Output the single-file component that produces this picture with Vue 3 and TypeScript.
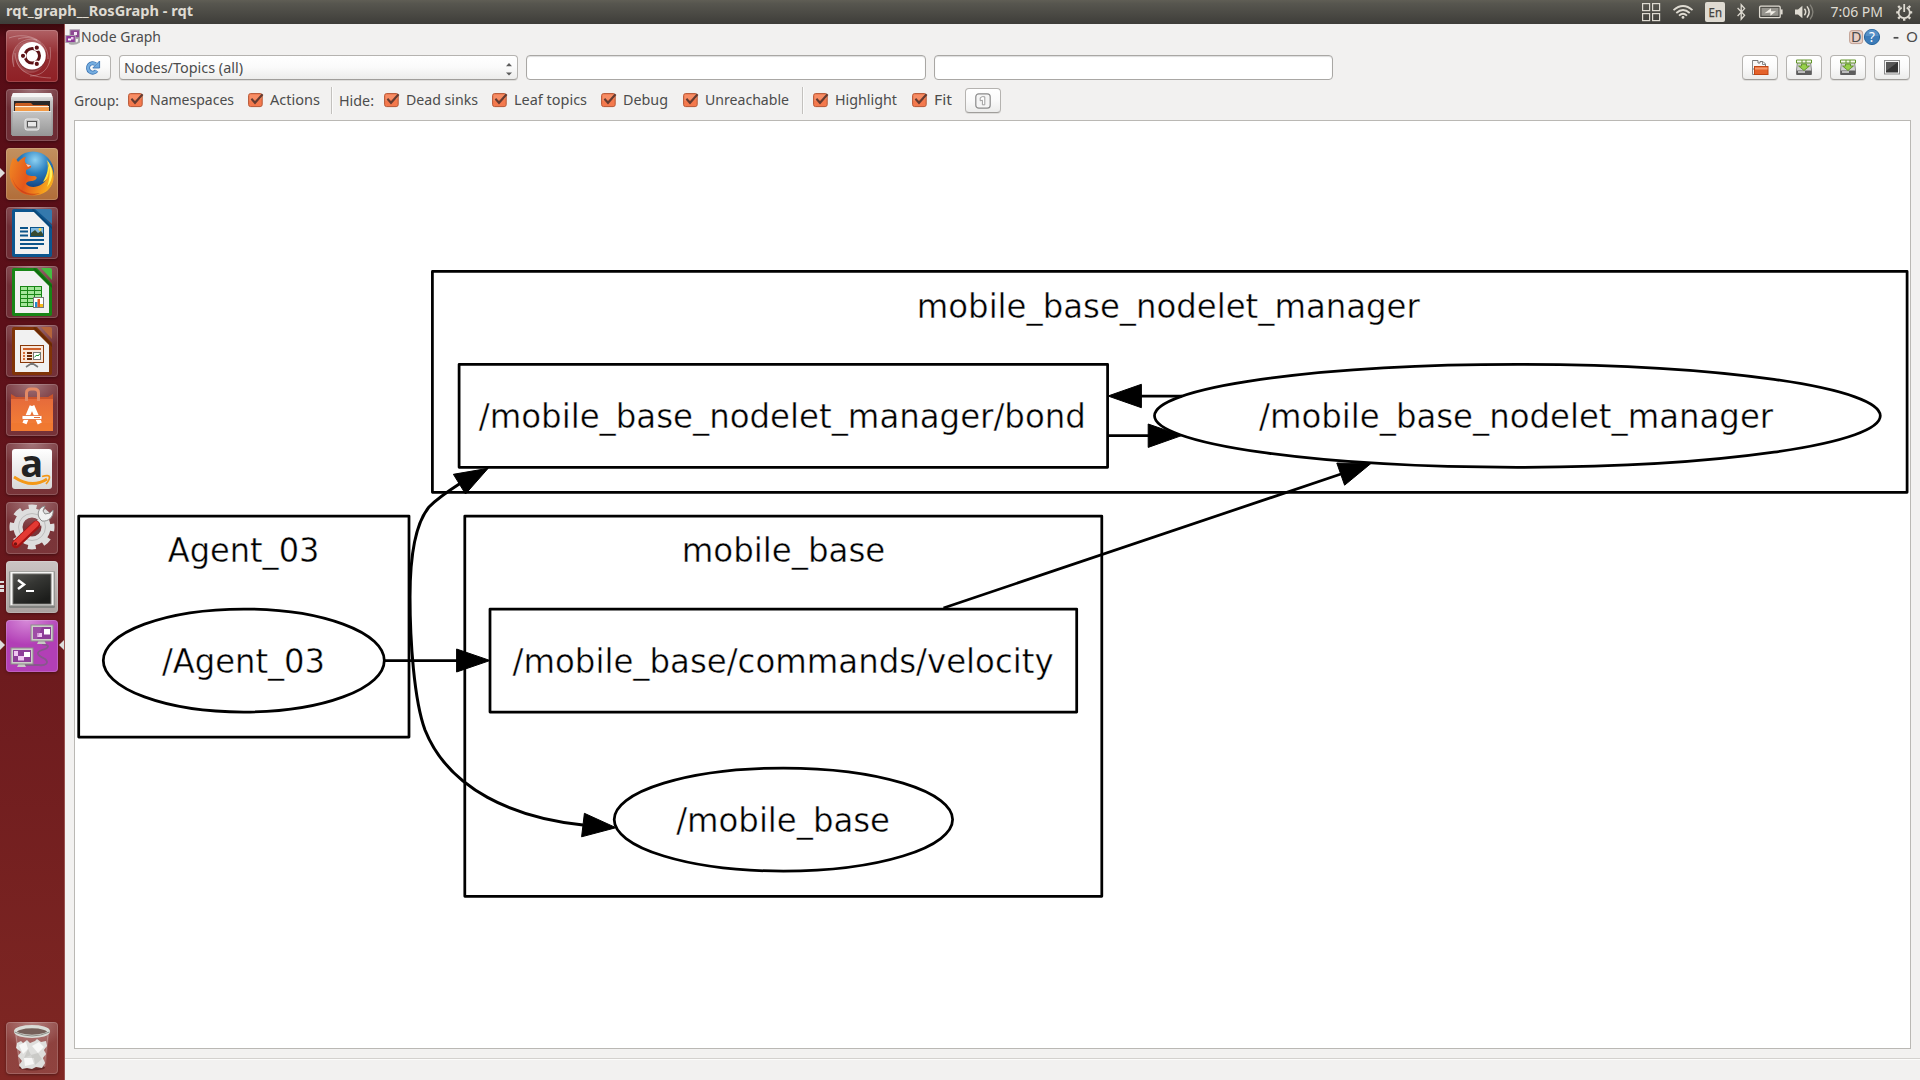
<script setup lang="ts">
import { h, type FunctionalComponent } from 'vue'

interface FitProps {
  text: string
  w: number
  size?: number
  color?: string
  weight?: number
}

/* Single-line label that always occupies exactly `w` pixels. */
const FitText: FunctionalComponent<FitProps> = (p) =>
  h('svg', { width: p.w, height: 20, style: 'overflow:visible;flex:none;display:block' }, [
    h(
      'text',
      {
        x: -1,
        y: 15,
        textLength: p.w + 2,
        lengthAdjust: 'spacingAndGlyphs',
        'font-family': '"Noto Sans", "Open Sans", sans-serif',
        'font-size': p.size ?? 14.4,
        'font-weight': p.weight ?? 400,
        fill: p.color ?? '#4c4c4c',
      },
      p.text,
    ),
  ])
FitText.props = ['text', 'w', 'size', 'color', 'weight']

interface Option {
  kind: 'label' | 'check' | 'sep'
  text?: string
  w?: number
  gap: number
}

const options: Option[] = [
  { kind: 'label', text: 'Group:', w: 43, gap: 0 },
  { kind: 'check', text: 'Namespaces', w: 82, gap: 10 },
  { kind: 'check', text: 'Actions', w: 48, gap: 15 },
  { kind: 'sep', gap: 12 },
  { kind: 'label', text: 'Hide:', w: 33, gap: 7 },
  { kind: 'check', text: 'Dead sinks', w: 70, gap: 11 },
  { kind: 'check', text: 'Leaf topics', w: 71, gap: 15 },
  { kind: 'check', text: 'Debug', w: 43, gap: 15 },
  { kind: 'check', text: 'Unreachable', w: 82, gap: 16 },
  { kind: 'sep', gap: 14 },
  { kind: 'check', text: 'Highlight', w: 60, gap: 9 },
  { kind: 'check', text: 'Fit', w: 16, gap: 16 },
]

interface Box { x: number; y: number; w: number; h: number }
const boxes: Box[] = [
  { x: 78.7, y: 516, w: 330.3, h: 221 },
  { x: 464.8, y: 516, w: 637, h: 380.3 },
  { x: 432.4, y: 271.4, w: 1474.7, h: 220.9 },
  { x: 490, y: 609, w: 586.7, h: 103 },
  { x: 459.1, y: 364.3, w: 648.5, h: 103 },
]

const ellipses = [
  { cx: 243.8, cy: 660.5, rx: 140.5 },
  { cx: 783.4, cy: 819.6, rx: 169.2 },
  { cx: 1517.4, cy: 415.8, rx: 362.9 },
]

const labels = [
  { t: 'Agent_03', x: 167.8, y: 562.4, w: 151.6 },
  { t: '/Agent_03', x: 161.9, y: 672.8, w: 163.2 },
  { t: 'mobile_base', x: 681.7, y: 562.4, w: 203.6 },
  { t: '/mobile_base/commands/velocity', x: 512.6, y: 672.8, w: 541 },
  { t: '/mobile_base', x: 676.2, y: 832, w: 213.8 },
  { t: 'mobile_base_nodelet_manager', x: 916.8, y: 317.7, w: 503 },
  { t: '/mobile_base_nodelet_manager/bond', x: 478.8, y: 428, w: 607 },
  { t: '/mobile_base_nodelet_manager', x: 1259.1, y: 428, w: 514 },
]

const edges = [
  'M385 660.5H458',
  'M1182 396H1140',
  'M1108 435.6H1150',
  'M943.5 608L1341 474',
]
const returnEdge =
  'M460 483.6C447 492 436 500 429 507C415 524 410 560 410 597C410 640 414 700 425 730C449 790 515 818 583 825'

const heads = [
  '456.6,649 490,660.5 456.6,672',
  '1141.4,384.3 1108,396 1141.4,407.7',
  '1148.2,424 1181.6,435.6 1148.2,447.4',
  '1336.8,463 1370.7,463.7 1344.6,485.2',
  '453.4,474.3 488.2,468.3 465.5,494',
  '584.4,813.3 616,827.7 581.6,836.8',
]
</script>

<template>
  <div class="desktop">
    <header class="panel">
      <FitText text="rqt_graph__RosGraph - rqt" :w="185" :size="14.2" :weight="700" color="#dfdbd2" />
      <div class="grow"></div>
      <svg class="tray" width="280" height="24" viewBox="1640 0 280 24" fill="none" stroke="#dfdbd2">
        <g stroke-width="1.2">
          <rect x="1642.6" y="3.6" width="7" height="7" /><rect x="1652.6" y="3.6" width="7" height="7" />
          <rect x="1642.6" y="13.6" width="7" height="7" /><rect x="1652.6" y="13.6" width="7" height="7" />
        </g>
        <g stroke-width="1.8">
          <path d="M1673.5 10.2Q1683 1.8 1692.5 10.2" /><path d="M1676.3 13Q1683 7 1689.7 13" />
          <path d="M1679 15.6Q1683 12 1687 15.6" /><circle cx="1683" cy="17.4" r="1.4" fill="#dfdbd2" stroke="none" />
        </g>
        <rect x="1705" y="2" width="20" height="20" rx="2" fill="#dfdbd2" stroke="none" />
        <text x="1708.6" y="17" font-size="12.5" font-family="Noto Sans, sans-serif" fill="#43423e" stroke="#43423e" stroke-width=".25" textLength="13.4" lengthAdjust="spacingAndGlyphs">En</text>
        <path d="M1737.6 8L1744.6 15.2L1741.2 19.2V4.8L1744.6 8.6L1737.6 16" stroke-width="1.3" />
        <rect x="1759.6" y="6.2" width="20.6" height="11.4" rx="1.2" stroke-width="1.3" />
        <rect x="1761.5" y="8" width="17" height="7.8" fill="#96948d" stroke="none" />
        <path d="M1781.6 9.4V14.4" stroke-width="2" />
        <path d="M1764.5 13.2L1771 8.2V11.2H1776L1770.4 15.8V12.6Z" fill="#f0ede5" stroke="none" />
        <path d="M1795 9.6H1798L1802.4 5.8V18.2L1798 14.4H1795Z" fill="#dfdbd2" stroke="none" />
        <path d="M1804.4 8.8Q1807 12 1804.4 15.2" stroke-width="1.5" /><path d="M1807 6.4Q1811.4 12 1807 17.6" stroke-width="1.5" />
        <path d="M1810 4.6Q1815.8 12 1810 19.4" stroke="#85837b" stroke-width="1.3" />
        <text x="1830.5" y="17" font-size="14.2" font-family="Noto Sans, sans-serif" fill="#dfdbd2" stroke="none" textLength="52.5" lengthAdjust="spacingAndGlyphs">7:06 PM</text>
        <g stroke-width="1.8">
          <path d="M1901.7 7.6A5.6 5.6 0 1 0 1906.7 7.6" /><path d="M1904.2 4V12" />
          <path stroke-width="2.4" d="M1908.6 7.6L1910.2 6M1910 12.4H1912.2M1908.6 17L1910.2 18.6M1904.2 18.4V20.8M1899.8 17L1898.2 18.6M1898.4 12.4H1896.2M1899.8 7.6L1898.2 6" />
        </g>
      </svg>
    </header>

    <div class="body">
      <nav class="launcher">
        <div class="tile ubuntu">
          <svg viewBox="0 0 52 52">
            <g fill="none" stroke="#fff" stroke-opacity=".28">
              <path d="M3 8C22 1 43 11 42 29" /><path d="M12 9C30 3 40 17 39 26" />
              <path d="M8 37C2 19 15 6 31 10" /><path d="M45 48C22 47 10 41 9 23" /><path d="M24 46C37 46 47 37 44 17" />
            </g>
            <path d="M8 37C2 22 12 9 31 10L40 20C41 38 31 46 18 42C12 38 9 32 9 23Z" fill="#fff" opacity=".15" />
            <circle cx="26" cy="26.6" r="14.2" fill="#4b0c10" opacity=".35" /><circle cx="26" cy="25.8" r="13.8" fill="#fff" />
            <circle cx="26.2" cy="25.8" r="7.3" fill="none" stroke="#5c1216" stroke-width="3" />
            <g fill="#5c1216" stroke="#fff" stroke-width="1.2">
              <circle cx="17" cy="25.8" r="2.7" /><circle cx="30.8" cy="17.7" r="2.7" /><circle cx="30.8" cy="33.9" r="2.7" />
            </g>
          </svg>
        </div>

        <div class="tile">
          <svg viewBox="0 0 52 52">
            <defs>
              <linearGradient id="cab" x2="0" y2="1"><stop offset="0" stop-color="#f3f3f3" /><stop offset=".2" stop-color="#c4c4c4" /><stop offset="1" stop-color="#8b8b8b" /></linearGradient>
              <linearGradient id="drawer" x2="0" y2="1"><stop stop-color="#c5c5c5" /><stop offset="1" stop-color="#969696" /></linearGradient>
            </defs>
            <path d="M7 4H45L47 9V46H5V9Z" fill="url(#cab)" />
            <path d="M7 4H45L46.5 8H5.5Z" fill="#f5f5f5" />
            <rect x="8" y="12" width="36" height="11" fill="#292828" />
            <path d="M10 14H25L27 16H42V22H9V15Z" fill="#c85d20" /><rect x="9" y="17" width="34" height="1.5" fill="#fff0d8" /><rect x="9" y="18.5" width="34" height="4" fill="#f39a45" />
            <path d="M7 22H45L46 47H6Z" fill="url(#drawer)" /><path d="M7 22.5H45" stroke="#e8e8e8" />
            <rect x="19" y="30" width="14" height="11" rx="2" fill="#bfbfbf" stroke="#f1f1f1" /><rect x="21.5" y="32.5" width="9" height="5.5" fill="#e8e8e8" stroke="#555" />
          </svg>
        </div>

        <div class="tile firefox">
          <svg viewBox="0 0 52 52">
            <defs>
              <radialGradient id="globe" cx=".55" cy=".2" r=".8"><stop stop-color="#8fd2f2" /><stop offset=".4" stop-color="#2a7fc0" /><stop offset="1" stop-color="#0d2a66" /></radialGradient>
              <linearGradient id="fox" x1="0" y1="0" x2="1" y2=".3"><stop stop-color="#f08a24" /><stop offset=".5" stop-color="#e4571b" /><stop offset="1" stop-color="#f8a81d" /></linearGradient>
            </defs>
            <circle cx="27" cy="24.5" r="21" fill="url(#globe)" />
            <path d="M40 11C44 19 41 27 37 34C43 31 45 25 44 18C50 28 47 39 39 44C43 38 47 25 40 11Z" fill="#ffe63d" />
            <path d="M7 10C9 10 11 12 12 14C15 11 17 9 20 9C18 12 19 15 21 16C23 17 26 17 25 19C24 21 20 21 20 23C19 27 23 28 27 28C31 28 32 30 29 32C26 34 21 32 20 36C25 42 38 39 42 28C44 22 43 17 41 13C50 22 50 35 41 43C30 51 14 48 7 37C1 27 4 17 7 10Z" fill="url(#fox)" />
            <path d="M41 12C48 20 48 31 41 39C44 31 45 22 41 12Z" fill="#fff05a" />
            <path d="M20 16L25 17.5L22 19Z" fill="#fff" opacity=".7" />
            <path d="M6 29C9 41 21 48 34 45C24 51 9 44 6 29Z" fill="#bd3217" opacity=".55" />
          </svg>
          <i class="mark left"></i>
        </div>

        <div class="tile">
          <svg viewBox="0 0 52 52">
            <path d="M8 2H31L46 18V48Q46 50 44 50H8Q6 50 6 48V4Q6 2 8 2Z" fill="#0c568f" />
            <path d="M9 5H28L43 20V47H9Z" fill="#f1f1f1" /><path d="M29 2H44Q46 2 46 4V17Z" fill="#3479ad" /><path d="M27 2L46 20V22L26 3Z" fill="#073c66" opacity=".65" />
            <path d="M14 21H22M14 24.5H22M14 28.5H22M14 33H38M14 37H38M14 41H32" stroke="#0b548a" stroke-width="1.8" />
            <rect x="24.5" y="20.5" width="13" height="9" fill="#83bbe1" stroke="#0b548a" /><path d="M25 29V26L29 23L32 26L35 24L37 27V29Z" fill="#394b30" /><circle cx="34" cy="22.5" r="1.4" fill="#fbd543" />
          </svg>
        </div>

        <div class="tile">
          <svg viewBox="0 0 52 52">
            <path d="M8 2H31L46 18V48Q46 50 44 50H8Q6 50 6 48V4Q6 2 8 2Z" fill="#188516" />
            <path d="M9 5H28L43 20V47H9Z" fill="#f1f1f1" /><path d="M35 2H44Q46 2 46 4V14Z" fill="#45bd42" /><path d="M29 2L46 19V22L27 3Z" fill="#0b5d0a" opacity=".65" />
            <rect x="14.5" y="20.5" width="21" height="20" fill="#a4e69a" stroke="#198616" /><path d="M14 24.5H36M14 28.5H36M14 32.5H36M14 36.5H36M21.5 20V41M28.5 20V41" stroke="#198616" />
            <rect x="27.5" y="31.5" width="10" height="10" fill="#fff" stroke="#777" /><path d="M29 41V36H31.5V41Z" fill="#238bd0" /><path d="M31.5 41V33H34V41Z" fill="#e35b22" /><path d="M34 41V38H37V41Z" fill="#f5ba18" />
          </svg>
        </div>

        <div class="tile">
          <svg viewBox="0 0 52 52">
            <path d="M8 2H31L46 18V48Q46 50 44 50H8Q6 50 6 48V4Q6 2 8 2Z" fill="#803407" />
            <path d="M9 5H28L43 20V47H9Z" fill="#f1f1f1" /><path d="M35 2H44Q46 2 46 4V14Z" fill="#b5653b" /><path d="M29 2L46 19V22L27 3Z" fill="#5b2303" opacity=".65" />
            <rect x="14.5" y="20.5" width="23" height="17" fill="#f8e6d9" stroke="#893809" /><path d="M17 24H35" stroke="#cd602a" stroke-width="2" />
            <path d="M17 28H19M17 31H19M17 34H19" stroke="#d56c37" stroke-width="2" /><path d="M21 28H26M21 31H26M21 34H26" stroke="#6c2a08" stroke-width="2" />
            <rect x="27.5" y="27.5" width="7" height="7" fill="#fff" stroke="#777" /><path d="M28.5 32L31 30L32 31L34 28.5" stroke="#168d32" fill="none" /><path d="M26 38V40M26 38L20 42M26 38L32 42" stroke="#777" stroke-width="1.6" />
          </svg>
        </div>

        <div class="tile">
          <svg viewBox="0 0 52 52">
            <defs><linearGradient id="bag" x2="0" y2="1"><stop stop-color="#e66b3b" /><stop offset="1" stop-color="#f58134" /></linearGradient></defs>
            <path d="M5 15L5 10L10 13H42L47 10V15Z" fill="#c9542c" /><path d="M5 15H47V47H5Z" fill="url(#bag)" /><path d="M5 39H47V47H5Z" fill="#ee762f" opacity=".65" />
            <path d="M20.5 17V9Q20.5 5 25 5H28Q32.5 5 32.5 9V17" fill="none" stroke="#e48a65" stroke-width="3" />
            <path d="M25.8 22L18.5 39.5M26.2 22L33.8 39.5" stroke="#fff" stroke-width="4.4" /><rect x="16" y="31.5" width="20" height="4" rx="1" fill="#fff" stroke="#df6731" stroke-width=".8" /><path d="M28 33.5H34" stroke="#e26b35" stroke-width="1" />
          </svg>
        </div>

        <div class="tile">
          <svg viewBox="0 0 52 52" overflow="visible">
            <defs><linearGradient id="amz" x2="0" y2="1"><stop stop-color="#fff" /><stop offset="1" stop-color="#d8d8d8" /></linearGradient></defs>
            <rect x="6" y="6" width="40" height="40" rx="3" fill="url(#amz)" /><text x="25.8" y="33.5" text-anchor="middle" font-family="Open Sans, sans-serif" font-weight="700" font-size="38" fill="#222">a</text>
            <path d="M8 34Q26 46 41 36" fill="none" stroke="#f39818" stroke-width="2.8" /><path d="M36 33.5Q43 31.5 43.5 34Q43.5 37 40 41" fill="none" stroke="#f39818" stroke-width="1.7" />
          </svg>
        </div>

        <div class="tile">
          <svg viewBox="0 0 52 52">
            <circle cx="26" cy="25" r="14" fill="none" stroke="#dedede" stroke-width="9" />
            <circle cx="26" cy="25" r="20" fill="none" stroke="#dedede" stroke-width="5" stroke-dasharray="8 7.708" stroke-dashoffset="4" />
            <circle cx="26" cy="25" r="13.5" fill="none" stroke="#bdbdbd" stroke-width="1" />
            <path d="M24 30L37 17" stroke="#e0e0e0" stroke-width="6" /><path d="M34 17C30 12 33 5 39 4L37 9L39 12L44 11L47 8C48 15 42 20 36 19Z" fill="#f1f1f1" stroke="#8d8d8d" />
            <path d="M10 42L30 23" stroke="#a41313" stroke-width="8.5" stroke-linecap="round" /><path d="M10 41L30 22" stroke="#e33a33" stroke-width="5.5" stroke-linecap="round" /><circle cx="9.5" cy="42" r="1.7" fill="#721512" />
          </svg>
        </div>

        <div class="tile terminal">
          <svg viewBox="0 0 52 52">
            <defs><linearGradient id="screen" x2=".6" y2="1"><stop stop-color="#545551" /><stop offset=".45" stop-color="#353633" /><stop offset="1" stop-color="#1c1d1b" /></linearGradient></defs>
            <rect x="3" y="10" width="46" height="37" rx="1.5" fill="#828380" /><rect x="4" y="10.5" width="44" height="34" fill="#f6f6f4" stroke="#a7a7a3" />
            <rect x="7" y="13" width="38" height="30" fill="url(#screen)" stroke="#6c6d69" />
            <path d="M12 19L18 23.5L12 28" stroke="#fff" stroke-width="2.5" fill="none" /><path d="M20 30H28" stroke="#fff" stroke-width="2" />
          </svg>
          <i class="bars"></i>
        </div>

        <div class="tile rqt">
          <svg viewBox="0 0 52 52">
            <path d="M36 24C45 25 43 28 36 30C27 33 35 37 39 39C44 43 39 46 33 45H19" fill="none" stroke="#87578c" stroke-width="1.8" />
            <path d="M33 20H38L40 24H31Z" fill="#c8c8c4" /><rect x="25" y="5" width="22" height="16" fill="#cecec9" stroke="#8c8c89" /><rect x="27" y="7" width="18" height="12" fill="#8d3d98" /><rect x="38" y="9" width="6" height="5.5" fill="#fff" /><rect x="31" y="13" width="5" height="4" fill="#efc4f1" /><path d="M27 7H36L31 19H27Z" fill="#b464b9" opacity=".45" />
            <path d="M13 43H18L20 47H11Z" fill="#c8c8c4" /><rect x="5" y="28" width="22" height="16" fill="#cecec9" stroke="#8c8c89" /><rect x="7" y="30" width="18" height="12" fill="#8d3d98" /><rect x="8" y="31" width="4" height="5" fill="#efc4f1" /><rect x="18" y="32" width="6" height="5" fill="#fff" /><rect x="12" y="36" width="6" height="4.5" fill="#efc4f1" />
          </svg>
          <i class="mark left"></i><i class="mark right"></i>
        </div>

        <div class="grow"></div>
        <div class="tile trash">
          <svg viewBox="0 0 52 52">
            <path d="M9 12L13 44Q26 51 40 44L43 12Z" fill="#fff" opacity=".13" />
            <ellipse cx="26" cy="45.5" rx="13" ry="3" fill="#501917" opacity=".65" />
            <path d="M11 21L15 19L17 21L21 18L24 21L29 19L31 17L35 20L40 19L41 24L38 28L40 32L37 36L39 41L36 46L30 45L26 47L21 46L16 47L13 43L16 39L12 34L15 30L10 26Z" fill="#dededc" />
            <path d="M13 23L20 20L22 27L17 32ZM26 24L33 20L38 25L32 31ZM18 36L25 33L28 42L19 44Z" fill="#f7f7f6" /><path d="M22 27L25 33L32 31L36 37L29 43L28 36L18 36Z" fill="#b9bab6" opacity=".55" />
            <path d="M10 13L14 45M42 13L38 45" stroke="#fff" stroke-opacity=".25" />
            <ellipse cx="26" cy="9.5" rx="16.5" ry="4.8" fill="#75605a" stroke="#dadcd7" stroke-width="3.2" /><path d="M8.5 10Q26 18 43.5 10" fill="none" stroke="#8c8f88" stroke-width="1" />
          </svg>
        </div>
      </nav>

      <main class="window">
        <div class="titlebar">
          <svg width="15" height="16" viewBox="0 0 15 16">
            <path d="M10 9H14V13Q10 16 4 14" fill="none" stroke="#aaa" stroke-width="2" />
            <rect x="5" y=".8" width="9.5" height="8" fill="#8d4993" stroke="#aaa4ad" /><rect x="9" y="3" width="3" height="3" fill="#f7e7f9" />
            <rect x=".8" y="6.5" width="9.5" height="7" fill="#8d3796" stroke="#aaa4ad" /><rect x="3" y="9.5" width="3" height="2" fill="#fff" /><rect x="6" y="8" width="2.5" height="2.5" fill="#edc9f0" />
          </svg>
          <FitText class="dock-name" text="Node Graph" :w="78" />
          <div class="grow"></div>
          <svg width="71" height="20" viewBox="1849 0 71 20">
            <rect x="1849.6" y="3.6" width="13" height="13" rx="2.5" fill="#e8cfc5" stroke="#c2a093" />
            <text x="1851" y="15" font-size="14" font-family="Noto Sans, sans-serif" fill="#4c4c4c" textLength="10.5" lengthAdjust="spacingAndGlyphs">D</text>
            <circle cx="1872" cy="10" r="7.6" fill="#3c7cb9" stroke="#27669e" /><path d="M1865.5 9A6.5 6.5 0 0 1 1878.5 9Z" fill="#6ea3d4" opacity=".55" />
            <text x="1872" y="15" text-anchor="middle" font-size="13.5" font-family="Noto Sans, sans-serif" fill="#fff">?</text>
            <path d="M1893.6 10.8H1898.4" stroke="#4c4c4c" stroke-width="1.7" />
            <text x="1906" y="15" font-size="14.2" font-family="Noto Sans, sans-serif" fill="#4c4c4c" textLength="12" lengthAdjust="spacingAndGlyphs">O</text>
          </svg>
        </div>

        <div class="toolbar">
          <button class="btn">
            <svg width="16" height="16" viewBox="0 0 16 16"><path d="M11.6 10.6A4.7 4.7 0 1 1 10.7 4.3" fill="none" stroke="#3d76b4" stroke-width="4" /><path d="M14.6 1V8H7.8Z" fill="#6ea9df" stroke="#3d76b4" stroke-width=".9" /><path d="M11.6 10.6A4.7 4.7 0 1 1 10.7 4.3" fill="none" stroke="#74ade0" stroke-width="2.4" /></svg>
          </button>
          <div class="combo">
            <FitText text="Nodes/Topics (all)" :w="117" />
            <div class="grow"></div>
            <svg width="6" height="13" viewBox="0 0 6 13" fill="#5b5b5b"><path d="M0 3.2L3 0L6 3.2Z" /><path d="M0 9.4L3 12.6L6 9.4Z" /></svg>
          </div>
          <input class="field wide" /><input class="field" />
          <div class="grow"></div>
          <button class="btn">
            <svg width="18" height="17" viewBox="0 0 18 17"><path d="M1.5 1.5H7V4H9V2.5H12L14.5 5V10H1.5Z" fill="#f7f7f7" stroke="#777" /><path d="M11.5 2.5V5.5H14.5" fill="none" stroke="#888" /><path d="M1.5 2V15.5H4" fill="none" stroke="#888" /><rect x="3.5" y="7.5" width="13.5" height="8" fill="#e4622b" stroke="#c14614" /><path d="M4 8.5H16.5V10.5H4Z" fill="#f59b6f" /></svg>
          </button>
          <button v-for="n in 2" :key="n" class="btn">
            <svg width="16" height="17" viewBox="0 0 16 17"><path d="M1.5 3H14.5L15.5 11V15.5H.5V11Z" fill="#d2d2d2" stroke="#888" /><rect x=".5" y="11.5" width="15" height="4.5" rx="1" fill="#5d5d5d" /><path d="M2 13H9" stroke="#ddd" stroke-width="1.5" /><path d="M.5 1H15.5V4H.5Z" fill="#f4faec" stroke="#62942b" /><path d="M6 1V4M10 1V4" stroke="#62942b" /><path d="M5.5 5H10.5V7H13.5L8 11.5L2.5 7H5.5Z" fill="#97d04b" stroke="#578920" stroke-width=".8" /></svg>
          </button>
          <button class="btn">
            <svg width="16" height="15" viewBox="0 0 16 15"><rect x=".5" y=".5" width="15" height="13.5" fill="#f5f5f5" stroke="#8b8b8b" /><rect x="2" y="2" width="12" height="10.5" fill="#343434" /><path d="M2 2H14L2 11Z" fill="#666" opacity=".7" /></svg>
          </button>
        </div>

        <div class="options">
          <template v-for="(o, i) in options" :key="i">
            <span v-if="o.kind === 'sep'" class="sep" :style="{ marginLeft: o.gap + 'px' }"></span>
            <FitText v-else-if="o.kind === 'label'" :text="o.text!" :w="o.w!" :style="{ marginLeft: o.gap + 'px' }" class="lab" />
            <label v-else class="check" :style="{ marginLeft: o.gap + 'px' }">
              <svg width="16" height="16" viewBox="0 0 16 16"><rect x=".6" y="1.6" width="13.6" height="13" rx="2" fill="#f4794d" stroke="#b65735" /><path d="M1.5 2.5H13.5V7Q7 7 1.5 9Z" fill="#f9a17e" opacity=".5" /><path d="M3.4 6.8L7 10.8L14.6 2.2" fill="none" stroke="#663b30" stroke-width="2.1" /></svg>
              <FitText :text="o.text!" :w="o.w!" />
            </label>
          </template>
          <button class="btn last">
            <svg width="16" height="16" viewBox="0 0 16 16"><rect x=".8" y=".8" width="14.4" height="14.4" rx="3" fill="#f5f5f5" stroke="#8b8b8b" stroke-width="1.2" /><path d="M5.2 4.8Q7 3 9.8 3.8V11.8H7.4V7.2L5.2 7.8Z" fill="#fff" stroke="#949494" stroke-width=".9" /></svg>
          </button>
        </div>

        <section class="view">
          <svg class="graph" width="1835" height="927" viewBox="75 121 1835 927">
            <g fill="none" stroke="#000" stroke-width="2.75">
              <rect v-for="(b, i) in boxes" :key="i" :x="b.x" :y="b.y" :width="b.w" :height="b.h" stroke-linejoin="round" />
              <ellipse v-for="(e, i) in ellipses" :key="'e' + i" :cx="e.cx" :cy="e.cy" :rx="e.rx" ry="51.5" />
              <path v-for="(d, i) in edges" :key="'p' + i" :d="d" />
              <path :d="returnEdge" stroke-width="3" />
            </g>
            <polygon v-for="(p, i) in heads" :key="i" :points="p" stroke="#000" stroke-width="1" />
            <text v-for="l in labels" :key="l.t" :x="l.x" :y="l.y" :textLength="l.w" lengthAdjust="spacingAndGlyphs">{{ l.t }}</text>
          </svg>
        </section>
        <footer class="status"></footer>
      </main>
    </div>
  </div>
</template>

<style>
body { margin: 0; overflow: hidden; }
</style>

<style scoped>
.desktop { width: 1920px; height: 1080px; display: flex; flex-direction: column; background: #f2f1f0; font-family: "Noto Sans", sans-serif; }
.grow { flex: 1; }
.panel { height: 24px; box-sizing: border-box; display: flex; align-items: center; padding-left: 7px; background: linear-gradient(#605e55, #57564f 15%, #3e3d39); }
.panel > svg:first-child { margin-top: -2px; }
.tray { display: block; }
.body { flex: 1; display: flex; min-height: 0; }
.launcher { width: 65px; box-sizing: border-box; border-right: 1px solid #9a5350; padding: 6px 0 6px 6px; display: flex; flex-direction: column; gap: 7px; background: linear-gradient(#3c080d, #570d16 14px, #5c1019 300px, #6d1b1e 650px, #7f2723); }
.tile { position: relative; width: 52px; height: 52px; flex: none; box-sizing: border-box; border-radius: 4px; background: radial-gradient(ellipse 75% 55% at 50% 0, rgba(255, 255, 255, .42), rgba(255, 255, 255, .13) 90%); box-shadow: inset 0 0 0 1px rgba(255, 255, 255, .17), 0 1px 3px rgba(0, 0, 0, .35); }
.tile svg { display: block; width: 52px; height: 52px; overflow: visible; }
.ubuntu { background: linear-gradient(#b06165, #952e32 45%, #8f2025); }
.firefox { background: linear-gradient(#c3915f, #b16d39); }
.terminal { background: linear-gradient(#cbc5c3, #aaa29f); }
.rqt { background: radial-gradient(ellipse 70% 50% at 40% 0, #d68ad8, #b23fb6 95%); }
.launcher .grow { margin-top: -7px; }
.mark { position: absolute; top: 20px; width: 0; height: 0; border: 5px solid transparent; }
.mark.left { left: -6px; border-left-color: #dedddc; border-right-width: 0; }
.mark.right { right: -6px; border-right-color: #dedddc; border-left-width: 0; }
.bars { position: absolute; left: -6px; top: 20px; width: 4px; height: 11px; background: repeating-linear-gradient(#dedddc 0 2.5px, transparent 2.5px 4.2px); }
.window { flex: 1; min-width: 0; display: flex; flex-direction: column; }
.titlebar { height: 31px; box-sizing: border-box; padding-top: 3px; display: flex; align-items: flex-start; }
.titlebar > svg:first-child { margin-top: 2px; }
.titlebar > svg:last-child { display: block; }
.dock-name { margin-left: 2px; }
.toolbar { height: 25px; display: flex; gap: 8px; padding: 0 10px; }
.btn { width: 36px; height: 25px; box-sizing: border-box; padding: 0; flex: none; display: flex; align-items: center; justify-content: center; border: 1px solid #b5b3b0; border-bottom-color: #a09e9b; border-radius: 4px; background: linear-gradient(#fff, #fafafa 50%, #ececeb); box-shadow: 0 1px 0 #dddcda; }
.combo { width: 399px; height: 25px; box-sizing: border-box; display: flex; align-items: center; padding: 0 5px; border: 1px solid #b5b3b0; border-bottom-color: #a09e9b; border-radius: 4px; background: linear-gradient(#fff, #fafafa 50%, #ececeb); box-shadow: 0 1px 0 #dddcda; }
.combo > svg:last-child { margin-top: 4px; }
.field { width: 399px; height: 25px; box-sizing: border-box; padding: 0; border: 1px solid #a9a7a4; border-radius: 4px; background: #fff; box-shadow: inset 0 1px 1px #ddd; outline: none; }
.field.wide { width: 400px; }
.options { height: 40px; box-sizing: border-box; display: flex; align-items: center; padding: 1px 0 0 10px; }
.sep { width: 1px; height: 27px; background: #c3c1be; border-right: 1px solid #fbfbfa; flex: none; }
.check { display: flex; align-items: center; gap: 7px; }
.check > svg:first-child { display: block; flex: none; margin-top: -1px; }
.check > svg:last-child { margin-top: -1px; }
.last { margin-left: 14px; }
.view { height: 929px; margin: 0 9px; box-sizing: border-box; border: 1px solid #bab8b4; background: #fff; overflow: hidden; }
.graph { display: block; }
.graph text { font-family: "DejaVu Sans", sans-serif; font-size: 34px; fill: #000; stroke: #fff; stroke-width: .42px; }
.status { flex: 1; margin-top: 9px; border-top: 1px solid #d3d1ce; box-shadow: inset 0 1px 0 #fcfcfb; }
</style>
